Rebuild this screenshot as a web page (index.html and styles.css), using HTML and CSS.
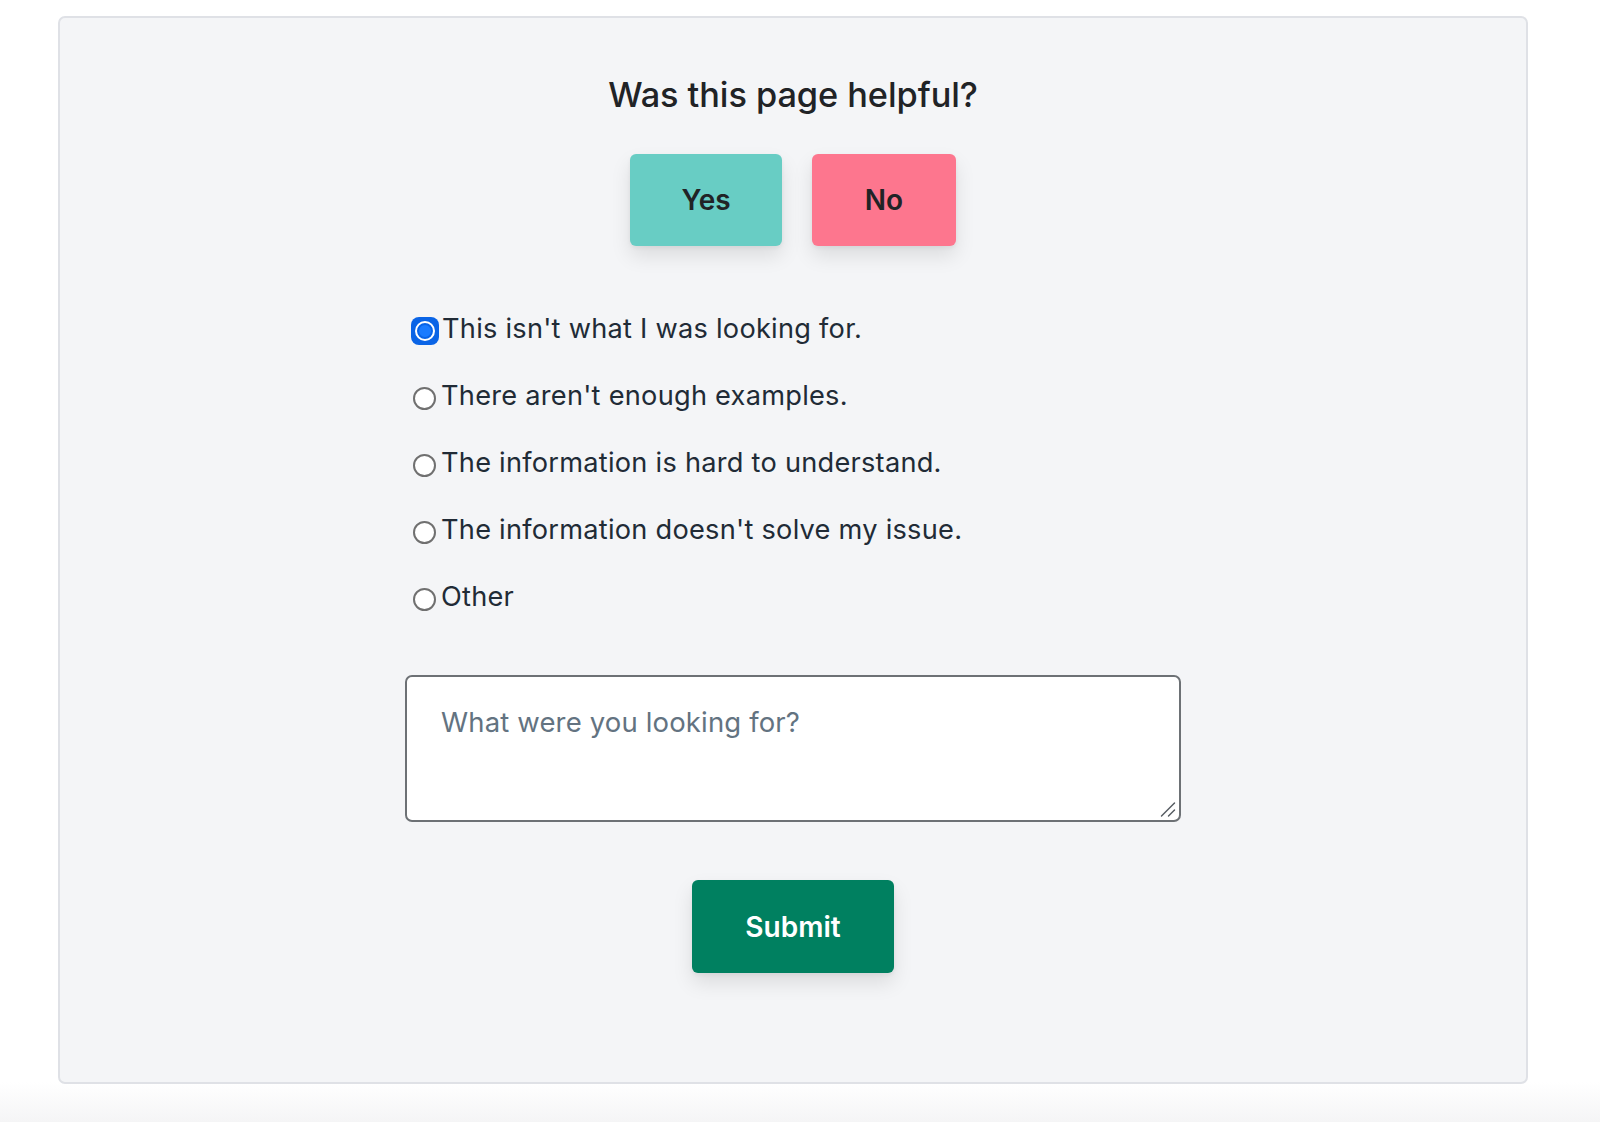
FILE: index.html
```html
<!DOCTYPE html>
<html lang="en">
<head>
<meta charset="utf-8">
<title>Feedback</title>
<link rel="stylesheet" href="styles.css">
</head>
<body>
<div class="card">
  <div class="inner">
    <h2 class="title">Was this page helpful?</h2>
    <div class="choice">
      <button class="btn btn-yes">Yes</button>
      <button class="btn btn-no">No</button>
    </div>
    <ul class="reasons">
      <li class="reason"><span class="radio radio-checked"><span class="dot"></span></span><span class="label">This isn't what I was looking for.</span></li>
      <li class="reason"><span class="radio"></span><span class="label">There aren't enough examples.</span></li>
      <li class="reason"><span class="radio"></span><span class="label">The information is hard to understand.</span></li>
      <li class="reason"><span class="radio"></span><span class="label">The information doesn't solve my issue.</span></li>
      <li class="reason"><span class="radio"></span><span class="label">Other</span></li>
    </ul>
    <div class="field">
      <textarea class="comment" placeholder="What were you looking for?"></textarea>
      <svg class="grip" width="16" height="16" viewBox="0 0 16 16" aria-hidden="true">
        <path d="M1.5 15 L14.5 2" stroke="#555a60" stroke-width="1.4" stroke-linecap="round"/>
        <path d="M8.5 15 L14.5 9" stroke="#555a60" stroke-width="1.4" stroke-linecap="round"/>
      </svg>
    </div>
    <button class="submit">Submit</button>
  </div>
</div>
</body>
</html>
```
FILE: styles.css
```css
html, body {
  margin: 0;
  padding: 0;
}
body {
  height: 1122px;
  overflow: hidden;
  background: linear-gradient(to bottom, #ffffff 0, #ffffff 1082px, #f5f5f6 1122px);
  font-family: Inter, "Noto Sans", sans-serif;
  color: #212326;
}
.card {
  box-sizing: border-box;
  margin: 16px 0 0 58px;
  width: 1470px;
  height: 1068px;
  border: 2px solid #dfe1e6;
  border-radius: 7px;
  background: #f4f5f7;
  padding-top: 57px;
}
.inner {
  width: 776px;
  margin: 0 auto;
  display: flex;
  flex-direction: column;
  align-items: center;
}
.title {
  margin: 0;
  font-size: 34.3px;
  line-height: 40px;
  font-weight: 500;
  color: #212326;
  letter-spacing: -0.05px;
}
.choice {
  display: flex;
  gap: 30px;
  margin-top: 39px;
}
.btn {
  height: 92px;
  border: none;
  border-radius: 6px;
  font-family: Inter, "Noto Sans", sans-serif;
  font-size: 28px;
  font-weight: 600;
  color: #212326;
  box-shadow: 0 10px 20px rgba(0, 0, 0, 0.10), 0 2px 4px rgba(0, 0, 0, 0.05);
  cursor: pointer;
}
.btn-yes {
  width: 152px;
  background: #68cdc4;
}
.btn-no {
  width: 144px;
  background: #fd768e;
}
.reasons {
  list-style: none;
  margin: 66px 0 0 0;
  padding: 0;
  align-self: stretch;
  display: flex;
  flex-direction: column;
  gap: 33px;
}
.reason {
  display: flex;
  align-items: center;
  height: 34px;
  padding-left: 8px;
}
.radio {
  box-sizing: border-box;
  width: 23px;
  height: 23px;
  border: 2px solid #707070;
  border-radius: 50%;
  background: #ffffff;
  margin: 4px 5px 0 0;
  flex: none;
  display: flex;
  align-items: center;
  justify-content: center;
}
.radio-checked {
  width: 28px;
  height: 28px;
  margin: 4px 3px 0 -2px;
  border: none;
  border-radius: 8px;
  background: #0a64e6;
}
.dot {
  box-sizing: border-box;
  width: 20px;
  height: 20px;
  border-radius: 50%;
  border: 2px solid #ffffff;
  background: #1a7bff;
  box-shadow: inset 0 0 0 2px #0a64e6;
}
.label {
  font-size: 27.2px;
  line-height: 34px;
  color: #212b36;
  letter-spacing: 0.25px;
}
.field {
  position: relative;
  margin-top: 61px;
  align-self: stretch;
}
.comment {
  display: block;
  box-sizing: border-box;
  width: 776px;
  height: 147px;
  border: 2px solid #6d7175;
  border-radius: 7px;
  background: #ffffff;
  padding: 28px 34px 20px;
  font-family: Inter, "Noto Sans", sans-serif;
  font-size: 27.5px;
  line-height: 34px;
  color: #212b36;
  letter-spacing: 0.15px;
  resize: none;
  outline: none;
}
.comment::placeholder {
  color: #637381;
}
.grip {
  position: absolute;
  right: 5px;
  bottom: 5px;
  pointer-events: none;
}
.submit {
  margin-top: 58px;
  width: 202px;
  height: 93px;
  border: none;
  border-radius: 6px;
  background: #008060;
  color: #ffffff;
  font-family: Inter, "Noto Sans", sans-serif;
  font-size: 28px;
  font-weight: 600;
  box-shadow: 0 10px 20px rgba(0, 0, 0, 0.10), 0 2px 4px rgba(0, 0, 0, 0.05);
  cursor: pointer;
}
```
